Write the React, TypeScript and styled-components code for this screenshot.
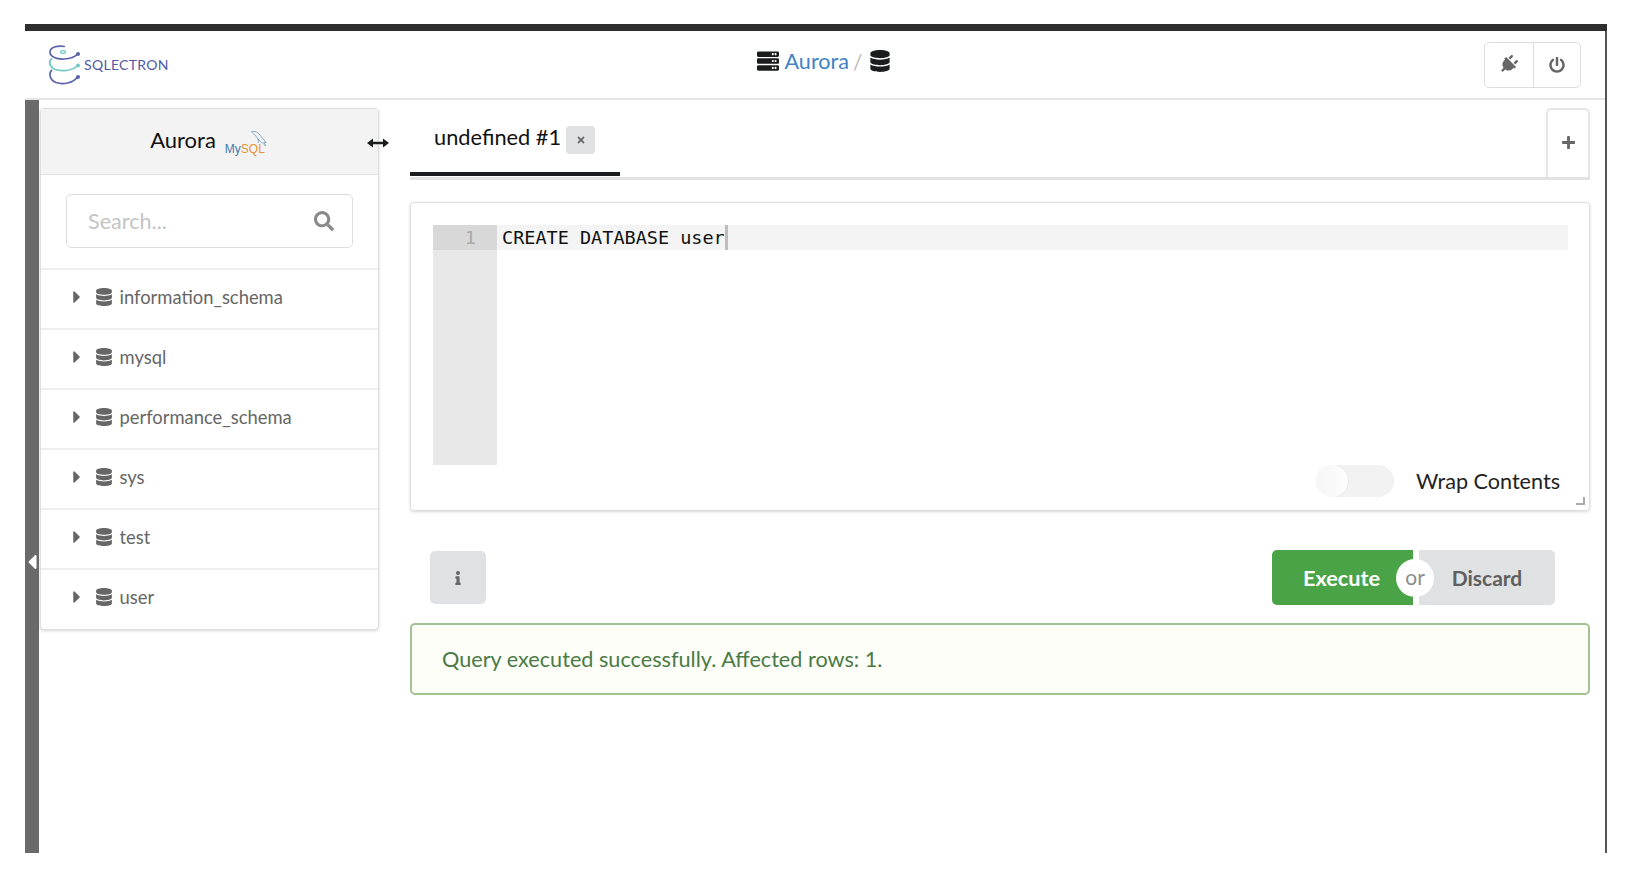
import React from "react";
import styled, { createGlobalStyle } from "styled-components";
import {
  FaCaretLeft,
  FaCaretRight,
  FaDatabase,
  FaInfo,
  FaPlug,
  FaPlus,
  FaPowerOff,
  FaSearch,
  FaServer,
  FaTimes,
} from "react-icons/fa";

const DATABASES = [
  "information_schema",
  "mysql",
  "performance_schema",
  "sys",
  "test",
  "user",
];

const GlobalStyle = createGlobalStyle`
  html, body {
    margin: 0;
    background: #fff;
  }
  body {
    font-family: Lato, "Open Sans", sans-serif;
    color: #000;
  }
  * {
    box-sizing: border-box;
  }
`;

const Logo = () => (
  <LogoWrap>
    <svg width="36" height="42" viewBox="0 0 36 42" fill="none">
      <path d="M17 2.5 C9 1 2 3.5 2 8 C2 13 9 15.5 16 15 C23 14.5 27 13 29 10.5" stroke="#5b63ab" strokeWidth="1.7" />
      <circle cx="30" cy="10" r="2" fill="#5b63ab" />
      <ellipse cx="15" cy="8" rx="2.4" ry="1.4" stroke="#72c9c3" strokeWidth="1.2" />
      <path d="M4 14.5 C0.5 17 1 22 6 25 C13 28 24 27 29 22" stroke="#72c9c3" strokeWidth="1.7" />
      <circle cx="30" cy="21.5" r="2" fill="#72c9c3" />
      <path d="M4 26 C0.5 29 1.5 36 8 38.5 C15 41 25 39 29 33.5" stroke="#5b63ab" strokeWidth="1.7" />
      <circle cx="30" cy="33" r="2" fill="#5b63ab" />
    </svg>
    <LogoText>SQLECTRON</LogoText>
  </LogoWrap>
);

const MysqlLogo = () => (
  <MysqlWrap>
    <svg viewBox="0 0 16 16" fill="none">
      <path
        d="M0.5 0.5 C4 0 7 1 9 4 C10.5 6.5 13 8.5 15 11.5 L13 11 L14.5 15 C13 13 11 11.5 9.5 10.5 C7 9 6.5 7 5 5 C3.5 3.5 1.5 2.5 0.5 0.5 Z M7 8 C7.5 9.5 7.5 10.5 7 12"
        stroke="#6d9cbd"
        strokeWidth="0.8"
      />
    </svg>
    <MysqlText>
      <MyPart>My</MyPart>
      <SqlPart>SQL</SqlPart>
    </MysqlText>
  </MysqlWrap>
);

const ResizeArrow = () => (
  <svg width="22" height="10" viewBox="0 0 22 10" fill="#1b1c1d">
    <path d="M0 5 L6 0.5 V3.7 H16 V0.5 L22 5 L16 9.5 V6.3 H6 V9.5 Z" />
  </svg>
);

const App = () => {
  return (
    <>
      <GlobalStyle />
      <Frame>
        <TopBar />
        <Header>
          <Logo />
          <Breadcrumb>
            <FaServer size={22} color="#1b1c1d" />
            <BreadcrumbLink>Aurora</BreadcrumbLink>
            <BreadcrumbSlash>/</BreadcrumbSlash>
            <FaDatabase size={22} color="#1b1c1d" />
          </Breadcrumb>
          <HeaderButtons>
            <HeaderButton>
              <PlugIcon size={19} />
            </HeaderButton>
            <HeaderButton>
              <FaPowerOff size={16} />
            </HeaderButton>
          </HeaderButtons>
        </Header>
        <Body>
          <CollapseBar>
            <FaCaretLeft size={24} color="#fff" />
          </CollapseBar>
          <Sidebar>
            <SidebarCard>
              <SidebarTitle>
                <ServerName>Aurora</ServerName>
                <MysqlLogo />
              </SidebarTitle>
              <SearchSection>
                <SearchBox>
                  <SearchInput placeholder="Search..." />
                  <FaSearch size={20} color="#8a8a8a" />
                </SearchBox>
              </SearchSection>
              {DATABASES.map((name) => (
                <DatabaseRow key={name}>
                  <FaCaretRight size={20} />
                  <DatabaseIcon size={18} />
                  <DatabaseName>{name}</DatabaseName>
                </DatabaseRow>
              ))}
            </SidebarCard>
            <ResizeHandle>
              <ResizeArrow />
            </ResizeHandle>
          </Sidebar>
          <Main>
            <Tabs>
              <ActiveTab>
                undefined #1
                <CloseTab>
                  <FaTimes size={10} />
                </CloseTab>
              </ActiveTab>
              <AddTab>
                <FaPlus size={15} />
              </AddTab>
            </Tabs>
            <EditorCard>
              <Editor>
                <Gutter>
                  <GutterActive>1</GutterActive>
                </Gutter>
                <CodeArea>
                  <ActiveLine>
                    CREATE DATABASE user
                    <Caret />
                  </ActiveLine>
                </CodeArea>
              </Editor>
              <EditorFooter>
                <Toggle>
                  <ToggleKnob />
                </Toggle>
                <ToggleLabel>Wrap Contents</ToggleLabel>
              </EditorFooter>
              <ResizeCorner />
            </EditorCard>
            <Actions>
              <InfoButton>
                <FaInfo size={14} />
              </InfoButton>
              <ButtonGroup>
                <ExecuteButton>Execute</ExecuteButton>
                <OrBadge>or</OrBadge>
                <DiscardButton>Discard</DiscardButton>
              </ButtonGroup>
            </Actions>
            <SuccessMessage>Query executed successfully. Affected rows: 1.</SuccessMessage>
          </Main>
        </Body>
      </Frame>
    </>
  );
};

export default App;

const Frame = styled.div`
  position: relative;
  margin: 24px 33px 0 25px;
  height: 829px;
  border-right: 2px solid #555;
  display: flex;
  flex-direction: column;
`;

const TopBar = styled.div`
  height: 7px;
  margin-right: -2px;
  background: #2e2e2e;
`;

const Header = styled.div`
  height: 69px;
  padding: 0 24px 0 23px;
  display: flex;
  align-items: center;
  justify-content: space-between;
  border-bottom: 2px solid #e6e6e6;
`;

const LogoWrap = styled.div`
  display: flex;
  align-items: center;
  width: 122px;
`;

const LogoText = styled.span`
  font-family: Lato, sans-serif;
  font-size: 14px;
  letter-spacing: 0.3px;
  color: #5059a5;
  white-space: nowrap;
`;

const Breadcrumb = styled.div`
  display: flex;
  align-items: center;
  gap: 6px;
  margin-top: -7px;
  margin-right: 6px;
`;

const BreadcrumbLink = styled.span`
  font-size: 21.6px;
  color: #4183c4;
`;

const BreadcrumbSlash = styled.span`
  margin: 0 1px 0 -2px;
  font-size: 21px;
  color: #bbb;
`;

const HeaderButtons = styled.div`
  display: flex;
  height: 46px;
  border: 1px solid #dedede;
  border-radius: 5px;
`;

const HeaderButton = styled.div`
  width: 47.5px;
  display: flex;
  align-items: center;
  justify-content: center;
  color: #666;
  & + & {
    border-left: 1px solid #dedede;
  }
`;

const PlugIcon = styled(FaPlug)`
  transform: rotate(45deg);
`;

const Body = styled.div`
  flex: 1;
  display: flex;
`;

const CollapseBar = styled.div`
  width: 14px;
  flex: none;
  padding-top: 450px;
  background: #6a6a6a;
  display: flex;
  justify-content: center;
  align-items: flex-start;
`;

const Sidebar = styled.div`
  position: relative;
  width: 339px;
  margin: 8px 0 0 1px;
  flex: none;
`;

const SidebarCard = styled.div`
  padding-bottom: 1px;
  border: 1px solid #dedede;
  border-radius: 4px;
  box-shadow: 0 1px 3px rgba(0, 0, 0, 0.16);
  background: #fff;
`;

const SidebarTitle = styled.div`
  height: 66px;
  padding-bottom: 4px;
  background: #f3f3f3;
  border-bottom: 1px solid #e2e2e2;
  display: flex;
  align-items: center;
  justify-content: center;
  gap: 9px;
`;

const ServerName = styled.span`
  font-size: 22px;
  color: #111;
`;

const MysqlWrap = styled.div`
  position: relative;
  width: 44px;
  height: 24px;
  margin-top: 4px;
  svg {
    position: absolute;
    left: 26px;
    top: 1px;
    width: 16px;
    height: 16px;
  }
`;

const MysqlText = styled.div`
  position: absolute;
  left: 0;
  bottom: -1px;
  font-family: "Liberation Sans", sans-serif;
  font-size: 12px;
  line-height: 1;
`;

const MyPart = styled.span`
  color: #3d7bae;
`;

const SqlPart = styled.span`
  color: #e4932f;
`;

const SearchSection = styled.div`
  height: 93px;
  padding: 19px 25px 0;
`;

const SearchBox = styled.div`
  height: 54px;
  padding: 0 18px 0 21px;
  border: 1px solid #dedede;
  border-radius: 5px;
  display: flex;
  align-items: center;
`;

const SearchInput = styled.input`
  flex: 1;
  min-width: 0;
  border: none;
  outline: none;
  padding: 0;
  font-family: Lato, sans-serif;
  font-size: 21.6px;
  &::placeholder {
    color: #c4c4c4;
  }
`;

const DatabaseRow = styled.div`
  height: 60px;
  padding: 0 0 4px 26px;
  border-top: 2px solid #eeeeee;
  display: flex;
  align-items: center;
  color: #666;
`;

const DatabaseIcon = styled(FaDatabase)`
  margin-left: 7.5px;
`;

const DatabaseName = styled.span`
  margin-left: 7px;
  font-size: 18.4px;
  color: #666;
`;

const ResizeHandle = styled.div`
  position: absolute;
  right: -10px;
  top: 30px;
  display: flex;
`;

const Main = styled.div`
  flex: 1;
  min-width: 0;
  padding: 8px 15px 0 31px;
`;

const Tabs = styled.div`
  height: 72px;
  display: flex;
  justify-content: space-between;
  border-bottom: 3px solid #e2e2e2;
`;

const ActiveTab = styled.div`
  width: 210px;
  height: 68px;
  padding: 0 0 8px 24px;
  display: flex;
  align-items: center;
  gap: 5px;
  font-size: 21.8px;
  color: #111;
  border-bottom: 4px solid #1b1c1d;
`;

const CloseTab = styled.span`
  width: 29px;
  height: 28px;
  margin-top: 8px;
  border-radius: 4px;
  background: #e0e1e2;
  color: #666;
  display: flex;
  align-items: center;
  justify-content: center;
`;

const AddTab = styled.div`
  width: 44px;
  padding-bottom: 2px;
  border: 2px solid #e6e6e6;
  border-bottom: none;
  border-radius: 5px 5px 0 0;
  display: flex;
  align-items: center;
  justify-content: center;
  color: #666;
`;

const EditorCard = styled.div`
  position: relative;
  height: 309px;
  margin-top: 22px;
  padding: 22px 21px 0 22px;
  border: 1px solid #dedede;
  border-radius: 4px;
  box-shadow: 0 1px 3px rgba(0, 0, 0, 0.16);
`;

const Editor = styled.div`
  display: flex;
  height: 240px;
`;

const Gutter = styled.div`
  width: 64px;
  background: #e8e8e8;
`;

const GutterActive = styled.div`
  height: 25px;
  padding-right: 21px;
  background: #d8d8d8;
  color: #aaa;
  text-align: right;
  font-family: "DejaVu Sans Mono", monospace;
  font-size: 18.5px;
  line-height: 25px;
`;

const CodeArea = styled.div`
  flex: 1;
`;

const ActiveLine = styled.div`
  height: 25px;
  padding-left: 5px;
  background: #f4f4f4;
  display: flex;
  font-family: "DejaVu Sans Mono", monospace;
  font-size: 18.5px;
  line-height: 25px;
  white-space: pre;
  color: #111;
`;

const Caret = styled.span`
  width: 3px;
  height: 25px;
  background: #bdbdbd;
`;

const EditorFooter = styled.div`
  position: absolute;
  right: 29px;
  bottom: 13px;
  display: flex;
  align-items: center;
  gap: 22px;
`;

const Toggle = styled.div`
  width: 78px;
  height: 32px;
  border-radius: 16px;
  background: #f2f2f2;
`;

const ToggleKnob = styled.div`
  width: 32px;
  height: 32px;
  border-radius: 50%;
  background: linear-gradient(90deg, #f6f6f6, #fdfdfd);
  box-shadow: 1px 0 1px rgba(0, 0, 0, 0.04);
`;

const ToggleLabel = styled.span`
  font-size: 21.6px;
  color: #222;
`;

const ResizeCorner = styled.div`
  position: absolute;
  right: 4px;
  bottom: 5px;
  width: 9px;
  height: 8px;
  border-right: 2px solid #aaa;
  border-bottom: 2px solid #aaa;
`;

const Actions = styled.div`
  height: 73px;
  margin-top: 39px;
  padding: 0 35px 0 20px;
  display: flex;
  justify-content: space-between;
`;

const InfoButton = styled.div`
  width: 56px;
  height: 53px;
  margin-top: 1px;
  border-radius: 5px;
  background: #e0e1e2;
  color: #666;
  display: flex;
  align-items: center;
  justify-content: center;
`;

const ButtonGroup = styled.div`
  position: relative;
  display: flex;
  gap: 6px;
  height: 55px;
`;

const ExecuteButton = styled.div`
  width: 141px;
  padding-right: 2px;
  border-radius: 5px 0 0 5px;
  background: #4aa347;
  color: #fff;
  font-size: 21.7px;
  font-weight: 700;
  display: flex;
  align-items: center;
  justify-content: center;
`;

const DiscardButton = styled.div`
  width: 136px;
  border-radius: 0 5px 5px 0;
  background: #e0e1e2;
  color: #5f5f5f;
  font-size: 21px;
  font-weight: 700;
  display: flex;
  align-items: center;
  justify-content: center;
`;

const OrBadge = styled.div`
  position: absolute;
  left: 124px;
  top: 9px;
  width: 38px;
  height: 38px;
  padding-bottom: 3px;
  border-radius: 50%;
  background: #fff;
  color: #8c8c8c;
  font-size: 21px;
  display: flex;
  align-items: center;
  justify-content: center;
  z-index: 1;
`;

const SuccessMessage = styled.div`
  height: 72px;
  padding-left: 30px;
  border: 2px solid #a3c293;
  border-radius: 5px;
  background: #fdfef8;
  color: #4a7a45;
  font-size: 21.67px;
  display: flex;
  align-items: center;
`;
